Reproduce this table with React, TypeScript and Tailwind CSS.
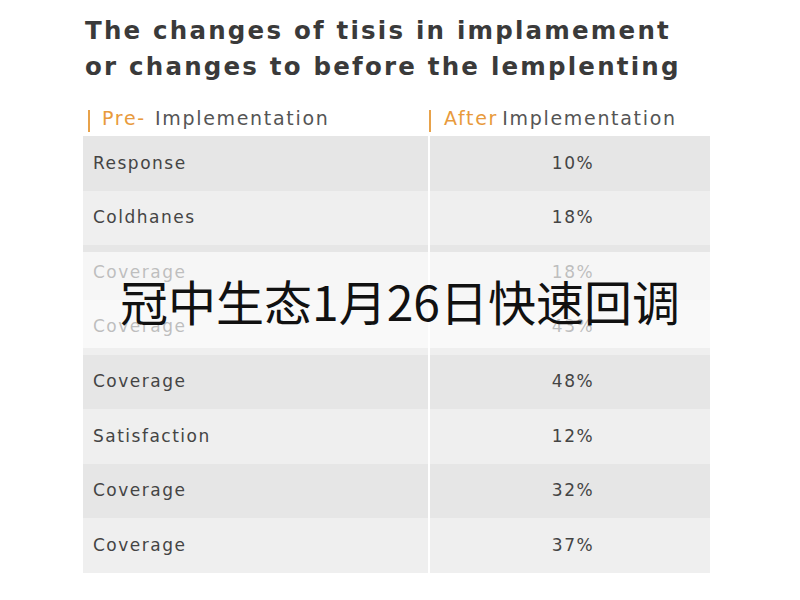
import React from "react";

const rows: [string, string][] = [
  ["Response", "10%"],
  ["Coldhanes", "18%"],
  ["Coverage", "18%"],
  ["Coverage", "43%"],
  ["Coverage", "48%"],
  ["Satisfaction", "12%"],
  ["Coverage", "32%"],
  ["Coverage", "37%"],
];

export default function App() {
  return (
    <div
      className="relative w-[800px] h-[600px] bg-white overflow-hidden"
      style={{ fontFamily: '"DejaVu Sans", "Liberation Sans", Arial, sans-serif' }}
    >
      <div className="pl-[85px] pt-[13px] text-[24.5px] leading-[36px] font-bold text-[#3a3a3a] tracking-[2.2px] whitespace-nowrap">
        <div>The changes of tisis in implamement</div>
        <div>or changes to before the lemplenting</div>
      </div>
      <div className="ml-[83px] mt-[17px] w-[627px] flex text-[19px] h-[32px] items-center tracking-[1.7px] whitespace-nowrap">
        <div className="w-[345px] flex items-center pl-[5px]">
          <span className="w-[2px] h-[22px] mt-[6px] bg-[#e8a24a] mr-[12px]" />
          <span className="text-[#e89a3c]">Pre</span>
          <span className="text-[#e89a3c]">-</span>
          <span className="text-[#555555] ml-[9px]">Implementation</span>
        </div>
        <div className="flex-1 flex items-center pl-[1px]">
          <span className="w-[2px] h-[22px] mt-[6px] bg-[#e8a24a] mr-[13px]" />
          <span className="text-[#e89a3c]">After</span>
          <span className="text-[#555555] ml-[4px]">Implementation</span>
        </div>
      </div>
      <div className="ml-[83px] mt-[2px] w-[627px] h-[437px] grid grid-rows-8">
        {rows.map(([label, val], i) => (
          <div
            key={i}
            className={`flex ${i % 2 === 0 ? "bg-[#e6e6e6]" : "bg-[#efefef]"}`}
          >
            <div className="w-[345px] flex items-center pl-[10px] text-[17px] tracking-[1.5px] text-[#444444]">
              {label}
            </div>
            <div className="w-[2px] bg-white" />
            <div className="flex-1 flex items-center justify-center pl-[6px] text-[17px] tracking-[1.5px] text-[#444444]">
              {val}
            </div>
          </div>
        ))}
      </div>
      <div className="absolute left-0 top-[252px] w-[800px] h-[96px] bg-white/65 flex items-center justify-center">
        <span
          className="text-[48px] text-[#111111] leading-none tracking-normal"
          style={{ fontFamily: '"Noto Sans CJK SC", "Noto Sans", sans-serif' }}
        >
          冠中生态1月26日快速回调
        </span>
      </div>
    </div>
  );
}
